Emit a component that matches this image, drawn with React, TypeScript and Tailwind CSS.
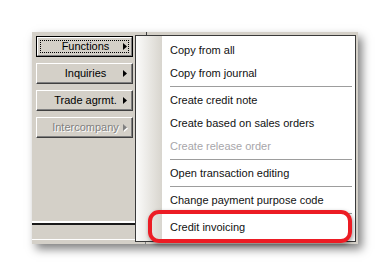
import React from "react";

const Arrow = ({ disabled }: { disabled?: boolean }) => (
  <svg width="6" height="9" viewBox="0 0 6 9" className="absolute right-[3px] top-[6px]">
    {disabled && <path d="M1 1 L5 4.5 L1 8 Z" fill="#ffffff" />}
    <path d="M0 0 L4 3.5 L0 7 Z" fill={disabled ? "#808080" : "#000000"} />
  </svg>
);

const Btn = ({ label, focused, disabled }: { label: string; focused?: boolean; disabled?: boolean }) => {
  if (focused) {
    return (
      <div className="relative h-[21px] w-[97px] border border-black">
        <div className="h-full w-full border-t border-l border-white border-b border-r border-b-[#808080] border-r-[#808080] p-[2px]">
          <div className="flex h-full w-full items-center justify-center border border-dotted border-black pl-[2px] text-black">
            {label}
          </div>
        </div>
        <Arrow />
      </div>
    );
  }
  return (
    <div className="relative flex h-[21px] w-[97px] items-center justify-center border-t border-l border-white border-b border-r border-b-[#404040] border-r-[#404040] pl-[2px] shadow-[inset_-1px_-1px_0_#808080]">
      <span className={disabled ? "text-[#808080] [text-shadow:1px_1px_0_#ffffff]" : "text-black"}>{label}</span>
      <Arrow disabled={disabled} />
    </div>
  );
};

const Item = ({ label, disabled }: { label: string; disabled?: boolean }) => (
  <div className={"flex h-[23px] items-center pt-[2px] " + (disabled ? "text-[#a7a6aa]" : "text-[#111111]")}>{label}</div>
);

const Sep = () => (
  <div className="flex h-[4px] items-center">
    <div className="h-px w-full bg-[#9d9d9d]" />
  </div>
);

export default function App() {
  return (
    <div className="h-[277px] w-[392px] bg-white pl-[32px] pt-[32px] font-['Liberation_Sans',Arial,sans-serif] text-[11px] leading-none">
      <div className="relative flex h-[212px] w-[326px] bg-[#d4d0c8] shadow-[4px_5px_9px_rgba(0,0,0,0.5)]">
        {/* left column */}
        <div className="flex w-[103px] flex-col pl-[4px] pt-[4px]">
          <div className="flex flex-col gap-[6px]">
            <Btn label="Functions" focused />
            <Btn label="Inquiries" />
            <Btn label="Trade agrmt." />
            <Btn label="Intercompany" disabled />
          </div>
          <div className="mt-auto -ml-[4px] mb-[4px] flex flex-col">
            <div className="h-[2px] w-full bg-white" />
            <div className="h-[2px] w-full bg-[#1a1a1a]" />
            <div className="h-[14px]" />
            <div className="h-px w-full bg-white" />
          </div>
        </div>
        {/* right area */}
        <div className="flex flex-1 flex-col pr-[2px]">
          <div className="flex h-[3px]">
            <div className="ml-[11px] h-full w-px bg-[#404040]" />
          </div>
          <div className="flex h-[207px] w-[221px] border border-[#3a3a3a] bg-white">
            <div className="w-[26px] bg-gradient-to-r from-[#fbfbfa] to-[#d8d5ce]" />
            <div className="flex flex-1 flex-col pl-[8px] pr-[3px] pt-[2px]">
              <Item label="Copy from all" />
              <Item label="Copy from journal" />
              <Sep />
              <Item label="Create credit note" />
              <Item label="Create based on sales orders" />
              <Item label="Create release order" disabled />
              <Sep />
              <Item label="Open transaction editing" />
              <Sep />
              <Item label="Change payment purpose code" />
              <Sep />
              <Item label="Credit invoicing" />
            </div>
          </div>
          <div className="flex h-[2px]">
            <div className="ml-[10px] h-full w-px bg-[#808080]" />
          </div>
        </div>
        {/* annotation */}
        <div className="absolute left-[116px] top-[178px] h-[33px] w-[204px] rounded-[11px] border-[4px] border-[#ec1c24] shadow-[1px_2px_4px_rgba(0,0,0,0.4)]" />
      </div>
    </div>
  );
}
